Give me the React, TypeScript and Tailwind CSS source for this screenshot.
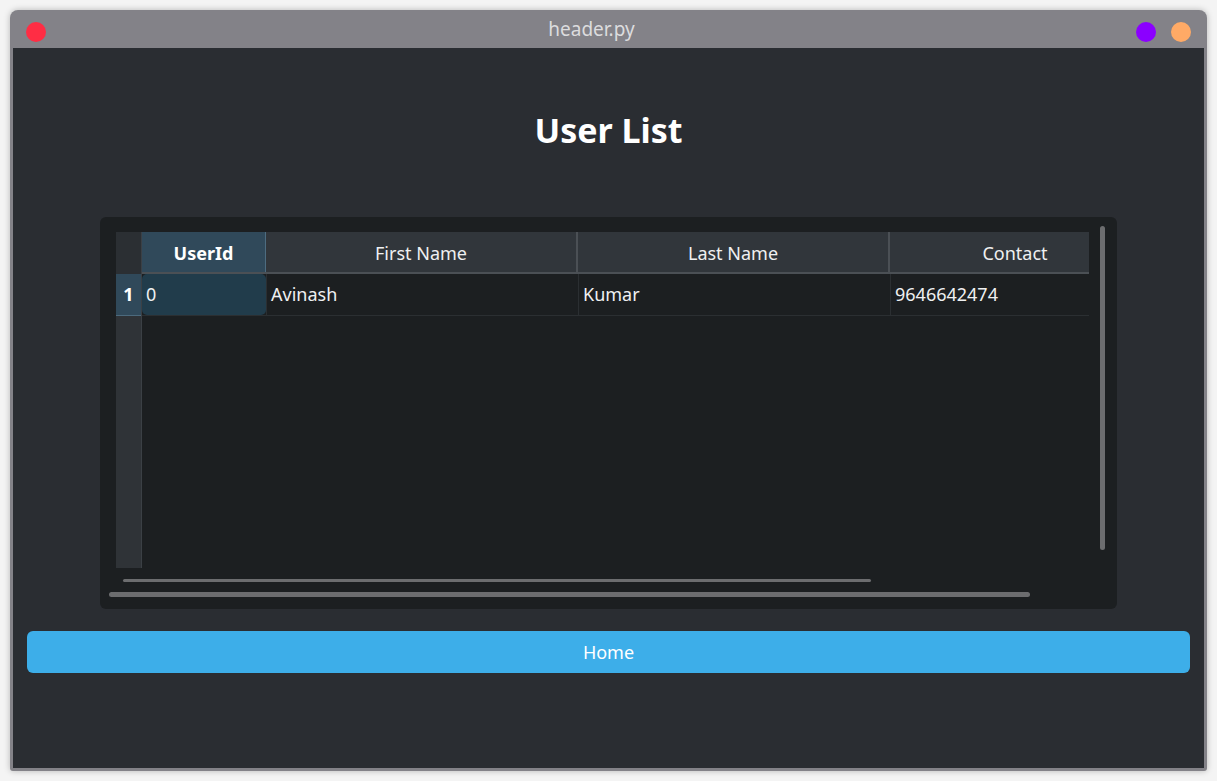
import React from 'react';

const font = { fontFamily: '"Noto Sans", "Open Sans", sans-serif' };

const columns = [
  { label: 'UserId', width: 'w-[124px]', value: '0' },
  { label: 'First Name', width: 'w-[312px]', value: 'Avinash' },
  { label: 'Last Name', width: 'w-[312px]', value: 'Kumar' },
  { label: 'Contact', width: 'w-[252px]', value: '9646642474' },
];

const UserTable = () => {
  return (
    <div className="relative mx-auto w-[1017px] h-[392px] rounded-[6px] bg-[#1c1f21] pt-[15px] pl-[16px]">
      <div className="flex w-[973px] h-[336px] overflow-hidden">
        {/* row header column */}
        <div className="flex flex-col w-[26px] shrink-0 bg-[#2f3337] border-r border-[#3b4045]">
          <div className="h-[42px] bg-[#2b2f33]" />
          <div className="h-[42px] flex items-center justify-center bg-[#30495a] border-b border-[#4c6a7d] text-white font-bold text-[18px]">
            1
          </div>
        </div>
        <div className="flex flex-col">
          <div className="flex h-[42px] border-b-2 border-[#4b5055]">
            {columns.map((c, i) => (
              <div
                key={c.label}
                className={`${c.width} shrink-0 flex items-center justify-center pt-[3px] text-[18px] ${
                  i === 0
                    ? 'bg-[#30495a] text-white font-bold border-r border-[#4d6c80]'
                    : 'bg-[#31363b] text-[#eff0f1] border-r-2 border-[#4b5055]'
                }`}
              >
                {c.label}
              </div>
            ))}
          </div>
          <div className="flex h-[42px] border-b border-[#2b2f32]">
            {columns.map((c, i) => (
              <div
                key={c.label}
                className={`${c.width} shrink-0 flex items-center text-[18px] text-[#eff0f1] ${
                  i === 0
                    ? 'bg-[#213c4b] rounded-[5px] pl-[4px]'
                    : 'pl-[4px] border-l border-[#2b2f32]'
                }`}
              >
                {c.value}
              </div>
            ))}
          </div>
        </div>
      </div>
      {/* scrollbars */}
      <div className="absolute left-[1000px] top-[9px] w-[5px] h-[324px] rounded-full bg-[#6c6d6f]" />
      <div className="absolute left-[23px] top-[362px] w-[748px] h-[3px] rounded-full bg-[#6c6d6f]" />
      <div className="absolute left-[9px] top-[375px] w-[921px] h-[5px] rounded-full bg-[#6c6d6f]" />
    </div>
  );
};

export default function App() {
  return (
    <div className="w-[1217px] h-[781px] bg-[#f4f4f4] p-[10px]" style={font}>
      <div className="w-[1197px] h-[761px] rounded-t-[8px] rounded-b-[3px] bg-[#838288] px-[3px] pb-[3px] shadow-[0_0_6px_rgba(0,0,0,0.25)] flex flex-col">
        <div className="relative h-[38px] shrink-0 flex items-center justify-center">
          <div className="absolute left-[13px] top-[12px] w-[20px] h-[20px] rounded-full bg-[#ff2d44]" />
          <span className="text-[19px] text-[#dcdcde] leading-none mr-[34px]">header.py</span>
          <div className="absolute right-[48px] top-[12px] w-[20px] h-[20px] rounded-full bg-[#8b00ff]" />
          <div className="absolute right-[13px] top-[12px] w-[20px] h-[20px] rounded-full bg-[#ffaa66]" />
        </div>
        <div className="flex-1 bg-[#2a2d32] flex flex-col">
          <div className="h-[169px] pt-[62px] text-center">
            <h1 className="text-[34px] leading-[40px] font-bold text-white">User List</h1>
          </div>
          <UserTable />
          <div className="px-[14px] pt-[22px]">
            <button className="w-full h-[42px] rounded-[6px] bg-[#3daee9] text-white text-[18px]">
              Home
            </button>
          </div>
        </div>
      </div>
    </div>
  );
}
